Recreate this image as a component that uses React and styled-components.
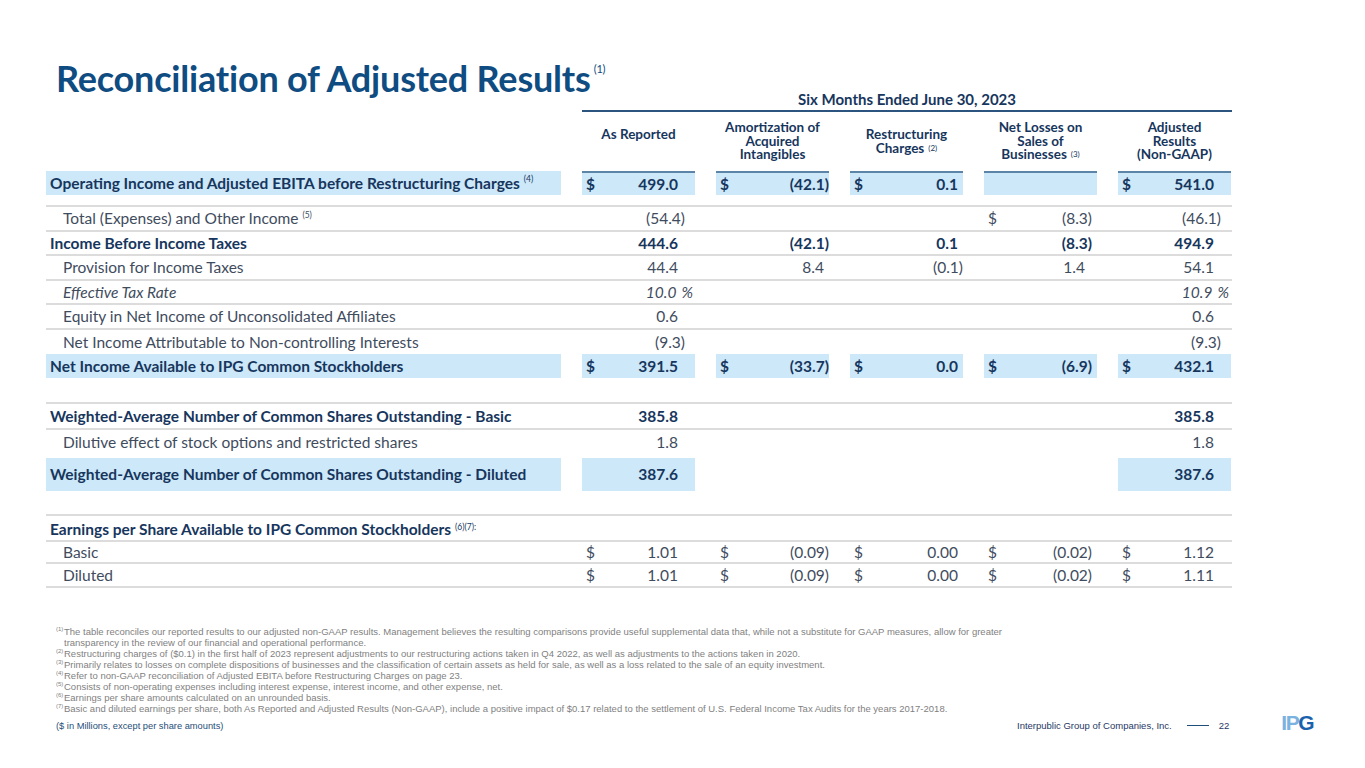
import React from "react";
import styled, { createGlobalStyle } from "styled-components";

const Global = createGlobalStyle`
  html, body { margin: 0; padding: 0; background: #fff; }
  #root { width: 1365px; height: 768px; overflow: hidden; }
`;

const NAVY = "#17365d";
const REG = "#3f4c5e";
const HL = "#cce8f9";
const LINE = "#dcdcdc";

const Page = styled.div`
  width: 1365px;
  height: 768px;
  box-sizing: border-box;
  padding: 0 0 0 46px;
  font-family: Lato, "Liberation Sans", sans-serif;
  display: flex;
  flex-direction: column;
`;

const Top = styled.div`
  display: grid;
  grid-template-columns: 536px 650px;
  height: 112px;
`;

const Title = styled.h1`
  margin: 0;
  padding: 58px 0 0 10px;
  font-family: Lato, "Liberation Sans", sans-serif;
  font-weight: 700;
  font-size: 36px;
  line-height: 40px;
  color: #0f4c81;
  white-space: nowrap;
  letter-spacing: -0.2px;
  sup {
    font-size: 11px;
    font-weight: 400;
    vertical-align: top;
    position: relative;
    top: -9px;
    margin-left: 3px;
    color: #0f4c81;
  }
`;

const Period = styled.div`
  align-self: end;
  border-bottom: 2px solid #2b557e;
  text-align: center;
  font-weight: 700;
  font-size: 15px;
  color: ${NAVY};
  padding-bottom: 2px;
`;

const Row = styled.div`
  display: grid;
  grid-template-columns: 515px repeat(5, 113px);
  column-gap: 21px;
  width: 1186px;
  height: ${(p) => p.$h}px;
  box-sizing: border-box;
  border-bottom: ${(p) => (p.$line ? `2px solid ${LINE}` : "0")};
  margin-top: ${(p) => p.$mt || 0}px;
`;

const HeadCell = styled.div`
  display: flex;
  align-items: center;
  justify-content: center;
  text-align: center;
  font-weight: 700;
  font-size: 13.5px;
  line-height: 13.5px;
  color: ${NAVY};
  padding-bottom: ${(p) => p.$pb || 0}px;
  sup {
    font-size: 8px;
    font-weight: 400;
    vertical-align: top;
    margin-left: 4px;
  }
`;

const Label = styled.div`
  display: flex;
  align-items: center;
  padding-left: ${(p) => (p.$indent ? 17 : 4)}px;
  padding-top: ${(p) => p.$pt || 0}px;
  background: ${(p) => (p.$hl ? HL : "transparent")};
  font-size: 15.5px;
  font-weight: ${(p) => (p.$bold ? 700 : 400)};
  font-style: ${(p) => (p.$italic ? "italic" : "normal")};
  color: ${(p) => (p.$bold ? NAVY : REG)};
  white-space: nowrap;
  sup {
    font-size: 8.5px;
    font-weight: 400;
    align-self: flex-start;
    margin: 3px 0 0 4px;
  }
`;

const Cell = styled.div`
  display: flex;
  align-items: center;
  justify-content: space-between;
  box-sizing: border-box;
  padding: 0 ${(p) => p.$pr}px 0 4px;
  background: ${(p) => (p.$hl ? HL : "transparent")};
  border-top: ${(p) => (p.$top ? "2px solid #5b84a6" : "0")};
  font-size: 15.5px;
  font-weight: ${(p) => (p.$bold ? 700 : 400)};
  font-style: ${(p) => (p.$italic ? "italic" : "normal")};
  color: ${(p) => (p.$bold ? NAVY : REG)};
  white-space: nowrap;
`;

const Dollar = styled.span`
  font-weight: ${(p) => (p.$bold ? 700 : 400)};
`;

const Pct = styled.span`
  margin-left: 5px;
  margin-right: ${(p) => -p.$hang}px;
`;

const Notes = styled.div`
  margin-top: ${(p) => p.$mt}px;
  padding-left: 10px;
  width: 950px;
  font-family: "Liberation Sans", Arial, sans-serif;
  font-size: 9.5px;
  line-height: 11px;
  color: #7f7f7f;
`;

const Note = styled.div`
  position: relative;
  padding-left: 8px;
  sup {
    position: absolute;
    left: 0;
    top: -2px;
    font-size: 6px;
  }
`;

const Footer = styled.div`
  display: flex;
  align-items: center;
  margin-top: 3px;
  padding-left: 10px;
  font-family: "Liberation Sans", Arial, sans-serif;
  font-size: 9.3px;
  color: #1f4e79;
`;

const Units = styled.div`
  flex: 1;
`;

const Company = styled.div`
  display: flex;
  align-items: center;
  font-size: 9.5px;
  color: #1f3864;
`;

const Dash = styled.span`
  display: inline-block;
  width: 22px;
  height: 1.5px;
  background: #1f4e79;
  margin: 0 10px 0 15px;
`;

const Logo = styled.div`
  margin: -6px 52px 0 52px;
  font-family: "Liberation Sans", Arial, sans-serif;
  font-weight: 700;
  font-size: 21px;
  letter-spacing: -1.5px;
  span:nth-child(1), span:nth-child(2) { color: #7ab2e0; }
  span:nth-child(3) { color: #1b62ad; }
`;

const pads = [17, 5, 5, 12, 17];

function Value({ c, i, bold, italic, hl, top }) {
  if (!c) return <Cell $pr={pads[i]} $hl={hl} $top={top} />;
  const neg = c.v && c.v.startsWith("(");
  const pct = c.pct;
  let pr = pads[i];
  if (neg) pr = Math.max(0, pr - 7);
  return (
    <Cell $pr={pr} $hl={hl} $top={top} $bold={bold} $italic={italic}>
      <Dollar $bold={c.db}>{c.d ? "$" : ""}</Dollar>
      <span>
        {c.v}
        {pct ? <Pct $hang={pads[i] - 2}>%</Pct> : null}
      </span>
    </Cell>
  );
}

function DataRow({ label, sup, bold, italic, indent, cells, hl, hlCells, top, h, line, mt, pt }) {
  return (
    <Row $h={h} $line={line} $mt={mt}>
      <Label $bold={bold} $italic={italic} $indent={indent} $hl={hl} $pt={pt}>
        {label}
        {sup ? <sup>{sup}</sup> : null}
      </Label>
      {[0, 1, 2, 3, 4].map((i) => (
        <Value
          key={i}
          i={i}
          c={cells ? cells[i] : null}
          bold={bold}
          italic={italic}
          hl={hlCells ? hlCells.includes(i) : false}
          top={top}
        />
      ))}
    </Row>
  );
}

const B = (v) => ({ d: true, db: true, v });
const D = (v) => ({ d: true, v });
const N = (v) => ({ v });

export default function App() {
  return (
    <>
      <Global />
      <Page>
        <Top>
          <Title>
            Reconciliation of Adjusted Results<sup>(1)</sup>
          </Title>
          <Period>Six Months Ended June 30, 2023</Period>
        </Top>
        <Row $h={59}>
          <div />
          <HeadCell $pb={14}>As Reported</HeadCell>
          <HeadCell>
            Amortization of
            <br />
            Acquired
            <br />
            Intangibles
          </HeadCell>
          <HeadCell>
            <span>
              Restructuring
              <br />
              Charges<sup>(2)</sup>
            </span>
          </HeadCell>
          <HeadCell>
            <span>
              Net Losses on
              <br />
              Sales of
              <br />
              Businesses<sup>(3)</sup>
            </span>
          </HeadCell>
          <HeadCell>
            Adjusted
            <br />
            Results
            <br />
            (Non-GAAP)
          </HeadCell>
        </Row>
        <DataRow
          h={24}
          label="Operating Income and Adjusted EBITA before Restructuring Charges"
          sup="(4)"
          bold
          hl
          top
          hlCells={[0, 1, 2, 3, 4]}
          cells={[B("499.0"), B("(42.1)"), B("0.1"), null, B("541.0")]}
        />
        <Row $h={12} $line />
        <DataRow
          h={24.5}
          line
          indent
          label="Total (Expenses) and Other Income"
          sup="(5)"
          cells={[N("(54.4)"), null, null, D("(8.3)"), N("(46.1)")]}
        />
        <DataRow
          h={24.5}
          line
          bold
          label="Income Before Income Taxes"
          cells={[N("444.6"), N("(42.1)"), N("0.1"), N("(8.3)"), N("494.9")]}
        />
        <DataRow
          h={24.5}
          line
          indent
          label="Provision for Income Taxes"
          cells={[N("44.4"), N("8.4"), N("(0.1)"), N("1.4"), N("54.1")]}
        />
        <DataRow
          h={24.5}
          line
          indent
          italic
          label="Effective Tax Rate"
          cells={[{ v: "10.0", pct: true }, null, null, null, { v: "10.9", pct: true }]}
        />
        <DataRow
          h={24.5}
          line
          indent
          label="Equity in Net Income of Unconsolidated Affiliates"
          cells={[N("0.6"), null, null, null, N("0.6")]}
        />
        <DataRow
          h={24}
          indent
          label="Net Income Attributable to Non-controlling Interests"
          cells={[N("(9.3)"), null, null, null, N("(9.3)")]}
        />
        <DataRow
          h={24}
          bold
          hl
          hlCells={[0, 1, 2, 3, 4]}
          label="Net Income Available to IPG Common Stockholders"
          cells={[B("391.5"), B("(33.7)"), B("0.0"), B("(6.9)"), B("432.1")]}
        />
        <Row $h={26} $line />
        <DataRow
          h={26}
          line
          bold
          label="Weighted-Average Number of Common Shares Outstanding - Basic"
          cells={[N("385.8"), null, null, null, N("385.8")]}
        />
        <DataRow
          h={25}
          indent
          label="Dilutive effect of stock options and restricted shares"
          cells={[N("1.8"), null, null, null, N("1.8")]}
        />
        <DataRow
          h={33}
          mt={3}
          bold
          hl
          hlCells={[0, 4]}
          label="Weighted-Average Number of Common Shares Outstanding - Diluted"
          cells={[N("387.6"), null, null, null, N("387.6")]}
        />
        <Row $h={25} $line />
        <DataRow
          h={26}
          pt={3}
          line
          bold
          label="Earnings per Share Available to IPG Common Stockholders"
          sup="(6)(7):"
        />
        <DataRow
          h={22}
          line
          indent
          label="Basic"
          cells={[D("1.01"), D("(0.09)"), D("0.00"), D("(0.02)"), D("1.12")]}
        />
        <DataRow
          h={24}
          line
          indent
          label="Diluted"
          cells={[D("1.01"), D("(0.09)"), D("0.00"), D("(0.02)"), D("1.11")]}
        />
        <Notes $mt={38}>
          <Note>
            <sup>(1)</sup>The table reconciles our reported results to our adjusted non-GAAP results. Management believes the resulting comparisons provide useful supplemental data that, while not a substitute for GAAP measures, allow for greater transparency in the review of our financial and operational performance.
          </Note>
          <Note>
            <sup>(2)</sup>Restructuring charges of ($0.1) in the first half of 2023 represent adjustments to our restructuring actions taken in Q4 2022, as well as adjustments to the actions taken in 2020.
          </Note>
          <Note>
            <sup>(3)</sup>Primarily relates to losses on complete dispositions of businesses and the classification of certain assets as held for sale, as well as a loss related to the sale of an equity investment.
          </Note>
          <Note>
            <sup>(4)</sup>Refer to non-GAAP reconciliation of Adjusted EBITA before Restructuring Charges on page 23.
          </Note>
          <Note>
            <sup>(5)</sup>Consists of non-operating expenses including interest expense, interest income, and other expense, net.
          </Note>
          <Note>
            <sup>(6)</sup>Earnings per share amounts calculated on an unrounded basis.
          </Note>
          <Note>
            <sup>(7)</sup>Basic and diluted earnings per share, both As Reported and Adjusted Results (Non-GAAP), include a positive impact of $0.17 related to the settlement of U.S. Federal Income Tax Audits for the years 2017-2018.
          </Note>
        </Notes>
        <Footer>
          <Units>($ in Millions, except per share amounts)</Units>
          <Company>
            Interpublic Group of Companies, Inc.
            <Dash />
            22
          </Company>
          <Logo>
            <span>I</span>
            <span>P</span>
            <span>G</span>
          </Logo>
        </Footer>
      </Page>
    </>
  );
}
